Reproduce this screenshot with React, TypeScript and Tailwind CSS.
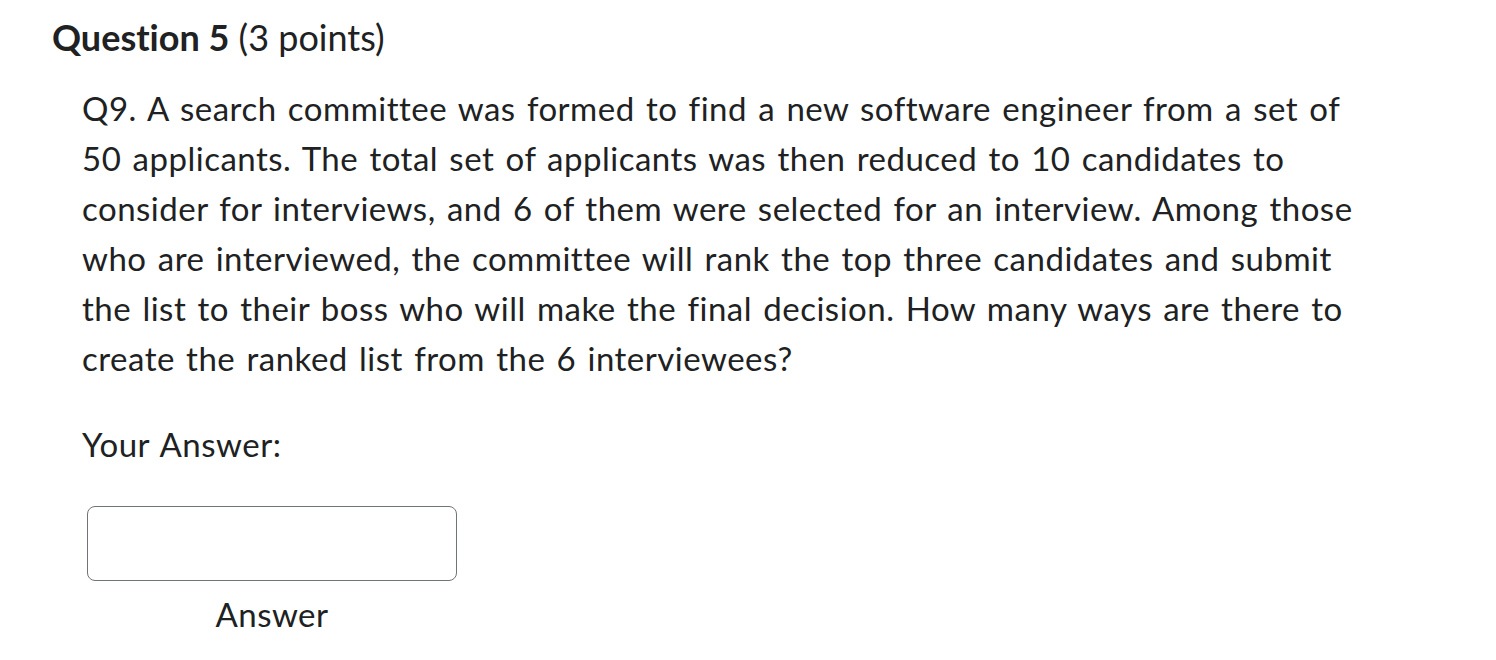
export default function App() {
  return (
    <div className="min-h-[660px] bg-white text-[#202122] font-['Lato',sans-serif] [font-variant-ligatures:none]">
      <div className="pl-[52px] pt-[12px]">
        <h2 className="text-[36px] leading-[50px]">
          <span className="font-bold">Question 5</span> (3 points)
        </h2>
        <div className="pl-[30px] pt-[21px] text-[33px] leading-[50px] tracking-[0.5px] [word-spacing:2.3px]">
          <p className="w-[1290px]">
            Q9. A search committee was formed to find a new software engineer from a set of 50
            applicants. The total set of applicants was then reduced to 10 candidates to consider
            for interviews, and 6 of them were selected for an interview. Among those who are
            interviewed, the committee will rank the top three candidates and submit the list to
            their boss who will make the final decision. How many ways are there to create the
            ranked list from the 6 interviewees?
          </p>
          <p className="mt-[36px]">Your Answer:</p>
          <div className="mt-[37px] ml-[5px] w-[370px] flex flex-col items-center">
            <input
              type="text"
              aria-label="Answer"
              className="w-full h-[75px] rounded-[8px] border border-[#6e7477] bg-white"
            />
            <span className="mt-[8px]">Answer</span>
          </div>
        </div>
      </div>
    </div>
  )
}
